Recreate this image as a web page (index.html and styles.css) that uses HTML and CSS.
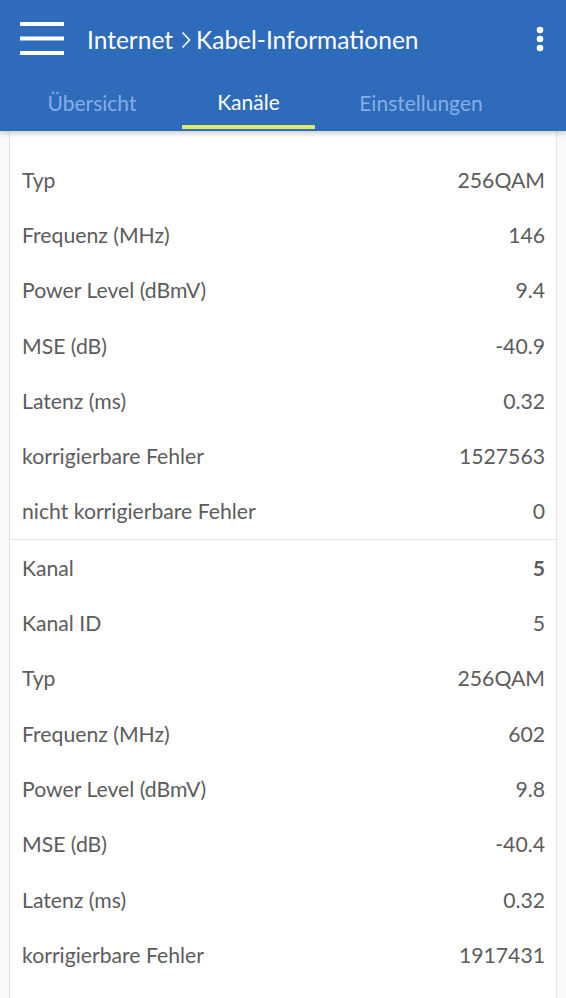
FILE: index.html
```html
<!DOCTYPE html>
<html lang="de">
<head>
<meta charset="utf-8">
<link rel="stylesheet" href="styles.css">
</head>
<body>
<header class="appbar">
  <div class="toolbar">
    <svg class="menu" width="44" height="34" viewBox="0 0 44 34">
      <rect x="0" y="0" width="44" height="4" fill="#fff"/>
      <rect x="0" y="14.5" width="44" height="4" fill="#fff"/>
      <rect x="0" y="29" width="44" height="4" fill="#fff"/>
    </svg>
    <div class="title">Internet<svg class="chev" width="10" height="18" viewBox="0 0 10 18"><path d="M1.5 1.5 L8.5 9 L1.5 16.5" fill="none" stroke="#fff" stroke-width="1.6"/></svg>Kabel-Informationen</div>
    <svg class="more" width="8" height="26" viewBox="0 0 8 26">
      <circle cx="4" cy="4" r="3.3" fill="#fff"/>
      <circle cx="4" cy="13" r="3.3" fill="#fff"/>
      <circle cx="4" cy="22" r="3.3" fill="#fff"/>
    </svg>
  </div>
  <nav class="tabs">
    <div class="tab">Übersicht</div>
    <div class="tab active">Kanäle</div>
    <div class="tab">Einstellungen</div>
  </nav>
</header>
<main class="content">
  <section class="card">
    <div class="group first">
      <div class="row"><span>Typ</span><span>256QAM</span></div>
      <div class="row"><span>Frequenz (MHz)</span><span>146</span></div>
      <div class="row"><span>Power Level (dBmV)</span><span>9.4</span></div>
      <div class="row"><span>MSE (dB)</span><span>-40.9</span></div>
      <div class="row"><span>Latenz (ms)</span><span>0.32</span></div>
      <div class="row"><span>korrigierbare Fehler</span><span>1527563</span></div>
      <div class="row"><span>nicht korrigierbare Fehler</span><span>0</span></div>
    </div>
    <div class="group">
      <div class="row"><span>Kanal</span><span class="bold">5</span></div>
      <div class="row"><span>Kanal ID</span><span>5</span></div>
      <div class="row"><span>Typ</span><span>256QAM</span></div>
      <div class="row"><span>Frequenz (MHz)</span><span>602</span></div>
      <div class="row"><span>Power Level (dBmV)</span><span>9.8</span></div>
      <div class="row"><span>MSE (dB)</span><span>-40.4</span></div>
      <div class="row"><span>Latenz (ms)</span><span>0.32</span></div>
      <div class="row"><span>korrigierbare Fehler</span><span>1917431</span></div>
    </div>
  </section>
</main>
</body>
</html>
```
FILE: styles.css
```css
html, body {
  margin: 0;
  padding: 0;
  height: 998px;
  overflow: hidden;
  background: #fafafa;
  font-family: "Lato", "Noto Sans", sans-serif;
}
.appbar {
  position: relative;
  z-index: 2;
  background: #2f6bbb;
  height: 131px;
  box-shadow: 0 2px 6px rgba(0,0,0,0.22);
  display: flex;
  flex-direction: column;
}
.toolbar {
  height: 78px;
  display: flex;
  align-items: center;
  padding-left: 20px;
}
.menu { flex: none; }
.title {
  color: #fff;
  font-size: 24.5px;
  margin-left: 23px;
  flex: 1;
  white-space: nowrap;
  display: flex;
  align-items: center;
}
.chev { flex: none; margin: 1px 5px 0 8px; }
.more { flex: none; margin-right: 22px; }
.tabs {
  display: flex;
  height: 53px;
}
.tab {
  color: #86ade4;
  font-size: 21px;
  display: flex;
  align-items: center;
  justify-content: center;
  box-sizing: border-box;
  padding-bottom: 4px;
}
.tab:nth-child(1) { width: 182px; padding-left: 2px; }
.tab:nth-child(2) { width: 133px; }
.tab:nth-child(3) { width: 212px; }
.tab.active {
  color: #fff;
  border-bottom: 4px solid #dfe96a;
  padding-bottom: 0;
  margin-bottom: 2px;
}
.content {
  padding: 0 9px;
}
.card {
  background: #fff;
  border-left: 1px solid #e4e4e4;
  border-right: 1px solid #e4e4e4;
  padding-top: 21px;
  min-height: 867px;
  box-sizing: border-box;
}
.group + .group {
  border-top: 1.5px solid #e6e6e6;
}
.row {
  height: 55.3px;
  display: flex;
  align-items: center;
  justify-content: space-between;
  padding: 0 11px 0 12px;
  color: #5c5c5c;
  font-size: 21.2px;
}
.bold { font-weight: 700; }
```
